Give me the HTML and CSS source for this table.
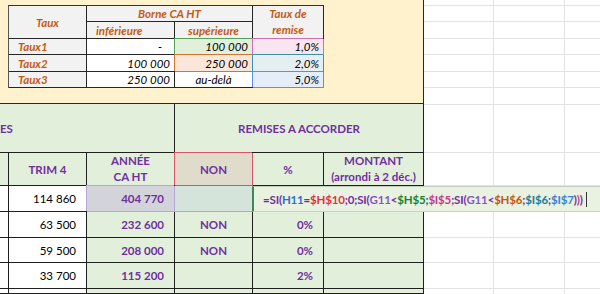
FILE: index.html
```html
<!DOCTYPE html>
<html lang="fr">
<head>
<meta charset="utf-8">
<title>Remises</title>
<link rel="stylesheet" href="styles.css">
</head>
<body>
<div class="sheet">
  <div class="panel">
    <div class="rates">
      <div class="c h taux-h">Taux</div>
      <div class="c h borne">Borne CA HT</div>
      <div class="c h remise">Taux de<br>remise</div>
      <div class="c h inf">inférieure</div>
      <div class="c h">supérieure</div>
      <div class="c h lbl">Taux1</div>
      <div class="c num dash">-</div>
      <div class="c num hl-green">100 000</div>
      <div class="c num hl-pink">1,0%</div>
      <div class="c h lbl">Taux2</div>
      <div class="c num">100 000</div>
      <div class="c num hl-orange">250 000</div>
      <div class="c num hl-teal">2,0%</div>
      <div class="c h lbl">Taux3</div>
      <div class="c num">250 000</div>
      <div class="c ctr">au-delà</div>
      <div class="c num hl-blue">5,0%</div>
    </div>
  </div>

  <div class="gridlines">
    <div class="gl r6"></div>
    <div class="gl r16"></div>
    <div class="gl r17"></div>
    <div class="gl r16"></div>
    <div class="gl r17"></div>
    <div class="gl r16"></div>
    <div class="gl r17"></div>
    <div class="gl r48"></div>
    <div class="gl r33"></div>
    <div class="gl r26"></div>
    <div class="gl r26"></div>
    <div class="gl r25"></div>
    <div class="gl r26"></div>
    <div class="gl rest"></div>
  </div>

  <div class="remises">
    <div class="es">ES</div>
    <div class="rem">REMISES A ACCORDER</div>

    <div></div>
    <div>TRIM 4</div>
    <div class="two">ANNÉE<br>CA HT</div>
    <div class="h10">NON</div>
    <div>%</div>
    <div class="two">MONTANT<br>(arrondi à 2 déc.)</div>

    <div class="w"></div>
    <div class="w val plain">114 860</div>
    <div class="val g11">404 770</div>
    <div class="h11"></div>
    <div class="formula"><span>=SI(</span><span class="f-blue">H11</span><span>=</span><span class="f-red">$H$10</span><span>;0;SI(</span><span class="f-violet">G11</span><span>&lt;</span><span class="f-green">$H$5</span><span>;</span><span class="f-magenta">$I$5</span><span>;SI(</span><span class="f-violet">G11</span><span>&lt;</span><span class="f-orange">$H$6</span><span>;</span><span class="f-teal">$I$6</span><span>;</span><span class="f-blue2">$I$7</span><span>)</span><span class="f-magenta">)</span><span>)</span><span class="caret"></span></div>

    <div class="w"></div>
    <div class="w val plain">63 500</div>
    <div class="val">232 600</div>
    <div>NON</div>
    <div class="val">0%</div>
    <div></div>

    <div class="w"></div>
    <div class="w val plain">59 500</div>
    <div class="val">208 000</div>
    <div>NON</div>
    <div class="val">0%</div>
    <div></div>

    <div class="w"></div>
    <div class="w val plain">33 700</div>
    <div class="val">115 200</div>
    <div></div>
    <div class="val">2%</div>
    <div></div>

    <div class="w"></div>
    <div class="w"></div>
    <div></div>
    <div></div>
    <div></div>
    <div></div>
  </div>
</div>
</body>
</html>
```

FILE: styles.css
```css
* { box-sizing: border-box; }

body {
  margin: 0;
  font-family: Lato, "Liberation Sans", sans-serif;
  font-size: 11.5px;
  background: #fff;
}

.sheet {
  display: grid;
  grid-template-columns: 424px 176px;
  grid-template-rows: 104px 190px;
  width: 600px;
  height: 294px;
  overflow: hidden;
  background: #fff;
}

/* ---------- top cream panel ---------- */
.panel {
  grid-column: 1;
  grid-row: 1;
  background: #fff2cc;
  border-right: 1px solid #262626;
  border-bottom: 1px solid #262626;
  padding: 5px 0 0 8px;
}

.rates {
  display: grid;
  grid-template-columns: 78px 88px 78px 71px;
  grid-template-rows: 16px 17px 16px 17px 16px;
  width: max-content;
  border-top: 1px solid #333;
  border-left: 1px solid #555;
}

.rates .c {
  display: flex;
  align-items: center;
  justify-content: flex-end;
  padding: 0 4px;
  background: #fff;
  border-right: 1px solid #262626;
  border-bottom: 1px solid #262626;
  font-style: italic;
  color: #000;
  white-space: nowrap;
}

.rates .h {
  background: #f2f2f2;
  color: #c55a11;
  font-weight: 700;
  justify-content: center;
}

.taux-h { grid-row: 1 / 3; }
.borne { grid-column: 2 / 4; }
.remise {
  grid-column: 4;
  grid-row: 1 / 3;
  text-align: center;
  line-height: 16px;
}
.rates .inf { justify-content: flex-start; padding-left: 9px; }
.rates .lbl { justify-content: flex-start; padding-left: 9px; }
.rates .dash { padding-right: 12px; }
.rates .ctr { justify-content: center; }

.rates .hl-green { background: #e2efda; border-color: #4fa35d; box-shadow: -1px -1px 0 #4fa35d; }
.rates .hl-pink { background: #f7e6ef; border-color: #cf6fae; box-shadow: -1px -1px 0 #cf6fae; }
.rates .hl-orange { background: #fbe6da; border-color: #cf7431; box-shadow: -1px -1px 0 #cf7431; }
.rates .hl-teal { background: #e5eef0; border-color: #3f8fa6; box-shadow: -1px -1px 0 #3f8fa6; }
.rates .hl-blue { background: #e5edf8; border-color: #5c8fe0; box-shadow: -1px -1px 0 #5c8fe0; }

/* ---------- right gridlines ---------- */
.gridlines {
  grid-column: 2;
  grid-row: 1 / 3;
  display: flex;
  flex-direction: column;
  background:
    linear-gradient(to right,
      transparent 69px, #e3e3e3 69px, #e3e3e3 70px, transparent 70px,
      transparent 140px, #e3e3e3 140px, #e3e3e3 141px, transparent 141px);
}
.gl { border-bottom: 1px solid #e3e3e3; flex: none; }
.r6 { height: 6px; }
.r16 { height: 16px; }
.r17 { height: 17px; }
.r48 { height: 48px; }
.r33 { height: 33px; }
.r26 { height: 26px; }
.r25 { height: 25px; }
.rest { flex: 1; border-bottom: none; }

/* ---------- bottom table ---------- */
.remises {
  grid-column: 1;
  grid-row: 2;
  z-index: 1;
  display: grid;
  grid-template-columns: 9px 78px 88px 78px 71px 100px;
  grid-template-rows: 49px 33px 26px 26px 25px 26px 1fr;
  color: #7030a0;
  font-weight: 700;
}

.remises > div {
  display: flex;
  align-items: center;
  justify-content: center;
  background: #e2efda;
  border-right: 1px solid #1f1f1f;
  border-bottom: 1px solid #1f1f1f;
  white-space: nowrap;
}

.remises > .es { grid-column: 1 / 4; justify-content: flex-start; padding-left: 0; }
.remises > .rem { grid-column: 4 / 7; }
.remises > .two { text-align: center; line-height: 16px; }
.remises > .w { background: #fff; }
.remises > .val { justify-content: flex-end; padding-right: 10px; }
.remises > .plain { font-weight: 400; color: #000; }

.remises > .h10 {
  background: #dfdccb;
  border-color: #d9536a;
  box-shadow: -1px -1px 0 #d9536a;
}
.remises > .g11 {
  background: #d3d4da;
  border-color: #b9a4dc;
  box-shadow: -1px -1px 0 #b9a4dc;
}
.remises > .h11 {
  background: #d4e4da;
  border-bottom-color: #8fb3e3;
  border-right: none;
}

.remises > .formula {
  grid-column: 5 / 7;
  margin-left: -1px;
  margin-right: -177px;
  justify-content: flex-start;
  padding-left: 9px;
  background: #e9f1e1;
  border-left: 2px solid #3d8a57;
  border-right: none;
  border-top: 1px solid #c3cfbd;
  border-bottom: 1px solid #c7d4c0;
  color: #7030a0;
  letter-spacing: -0.17px;
}

.f-blue { color: #2f6fc8; }
.f-red { color: #e0303f; }
.f-violet { color: #8a55c2; }
.f-green { color: #16862c; }
.f-magenta { color: #c23a8c; }
.f-orange { color: #c2580f; }
.f-teal { color: #1f7d96; }
.f-blue2 { color: #3a7fd6; }

.caret {
  display: inline-block;
  width: 1px;
  height: 15px;
  margin-left: 3px;
  background: #333;
}
```
